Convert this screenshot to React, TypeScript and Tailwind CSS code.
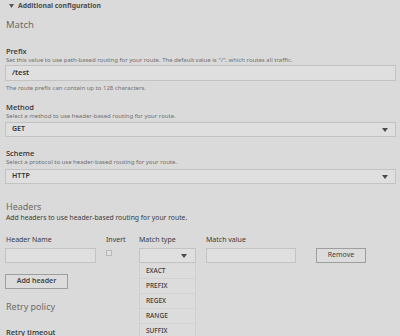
const Caret = () => (
  <svg width="6" height="4" viewBox="0 0 6 4" className="shrink-0">
    <path d="M0 0 H6 L3 4 Z" fill="#4a4a4a" />
  </svg>
);

const Label = ({ children, className = "" }: { children: React.ReactNode; className?: string }) => (
  <p className={`text-[7.5px] leading-[9px] font-medium text-[#2e2e2e] ${className}`}>{children}</p>
);

const Hint = ({ children, className = "" }: { children: React.ReactNode; className?: string }) => (
  <p className={`text-[6px] leading-[8px] text-[#707070] ${className}`}>{children}</p>
);

const Select = ({ value, className = "" }: { value: string; className?: string }) => (
  <div
    className={`flex h-[15px] items-center justify-between border border-[#c3c3c3] bg-[#dfdfdf] pl-[6px] pr-[7px] ${className}`}
  >
    <span className="text-[7px] font-semibold text-[#333]">{value}</span>
    <Caret />
  </div>
);

const matchTypes = ["EXACT", "PREFIX", "REGEX", "RANGE", "SUFFIX"];

export default function App() {
  return (
    <div className="relative h-[336px] w-[400px] overflow-hidden bg-[#dadada] font-['Noto_Sans',sans-serif]">
      <div className="flex h-[12px] items-center gap-[4px] pl-[9px]">
        <svg width="5" height="4" viewBox="0 0 5 4">
          <path d="M0 0 H5 L2.5 4 Z" fill="#555" />
        </svg>
        <span className="text-[6.8px] font-bold text-[#4d4d4d]">Additional configuration</span>
      </div>

      <div className="px-[5px]">
        <h2 className="mt-[6px] pl-[1px] text-[9.5px] leading-[14px] text-[#6b6b6b]">Match</h2>

        <Label className="mt-[15px] pl-[1px]">Prefix</Label>
        <Hint className="pl-[1px]">
          Set this value to use path-based routing for your route. The default value is "/", which routes all traffic.
        </Hint>
        <div className="mt-[1px] flex h-[16px] w-[391px] items-center border border-[#c3c3c3] bg-[#dfdfdf] pl-[6px]">
          <span className="text-[7.5px] font-semibold text-[#333]">/test</span>
        </div>
        <Hint className="mt-[3px] pl-[1px]">The route prefix can contain up to 128 characters.</Hint>

        <Label className="mt-[11px] pl-[1px]">Method</Label>
        <Hint className="pl-[1px]">Select a method to use header-based routing for your route.</Hint>
        <Select value="GET" className="mt-[2px] w-[391px]" />

        <Label className="mt-[12px] pl-[1px]">Scheme</Label>
        <Hint className="pl-[1px]">Select a protocol to use header-based routing for your route.</Hint>
        <Select value="HTTP" className="mt-[3px] w-[391px]" />

        <h2 className="mt-[17px] pl-[1px] text-[9px] leading-[12px] text-[#6b6b6b]">Headers</h2>
        <p className="mt-[1px] pl-[1px] text-[6.8px] leading-[8px] text-[#3a3a3a]">
          Add headers to use header-based routing for your route.
        </p>

        <div className="mt-[14px] flex text-[7px] leading-[8px] text-[#3a3a3a]">
          <span className="w-[101px] pl-[1px]">Header Name</span>
          <span className="w-[33px]">Invert</span>
          <span className="w-[67px]">Match type</span>
          <span>Match value</span>
        </div>

        <div className="mt-[4px] flex h-[15px] items-start">
          <div className="h-[15px] w-[91px] border border-[#c3c3c3] bg-[#dfdfdf]" />
          <div className="ml-[10px] mt-[2px] h-[6px] w-[6px] border border-[#b8b8b8] bg-[#e0e0e0]" />
          <div className="ml-[27px] flex h-[15px] w-[57px] items-center justify-end border border-[#c3c3c3] bg-[#dfdfdf] pr-[8px]">
            <Caret />
          </div>
          <div className="ml-[10px] h-[15px] w-[90px] border border-[#c3c3c3] bg-[#dfdfdf]" />
          <button className="ml-[20px] flex h-[15px] w-[50px] items-center justify-center border border-[#9e9e9e] bg-[#dcdcdc] text-[7px] text-[#444]">
            Remove
          </button>
        </div>

        <button className="mt-[11px] flex h-[15px] w-[63px] items-center justify-center border border-[#9e9e9e] bg-[#dcdcdc] text-[7px] font-semibold text-[#444]">
          Add header
        </button>

        <h2 className="mt-[12px] pl-[1px] text-[9px] leading-[12px] text-[#6b6b6b]">Retry policy</h2>
        <Label className="mt-[15px] pl-[1px]">Retry timeout</Label>
      </div>

      <div className="absolute left-[139px] top-[264px] w-[57px] border-x border-[#cfcfcf] bg-[#dcdcdc]">
        {matchTypes.map((t) => (
          <div
            key={t}
            className="flex h-[15px] items-center border-b border-[#d2d2d2] pl-[6px] text-[6.5px] font-medium text-[#3a3a3a]"
          >
            {t}
          </div>
        ))}
      </div>
    </div>
  );
}
